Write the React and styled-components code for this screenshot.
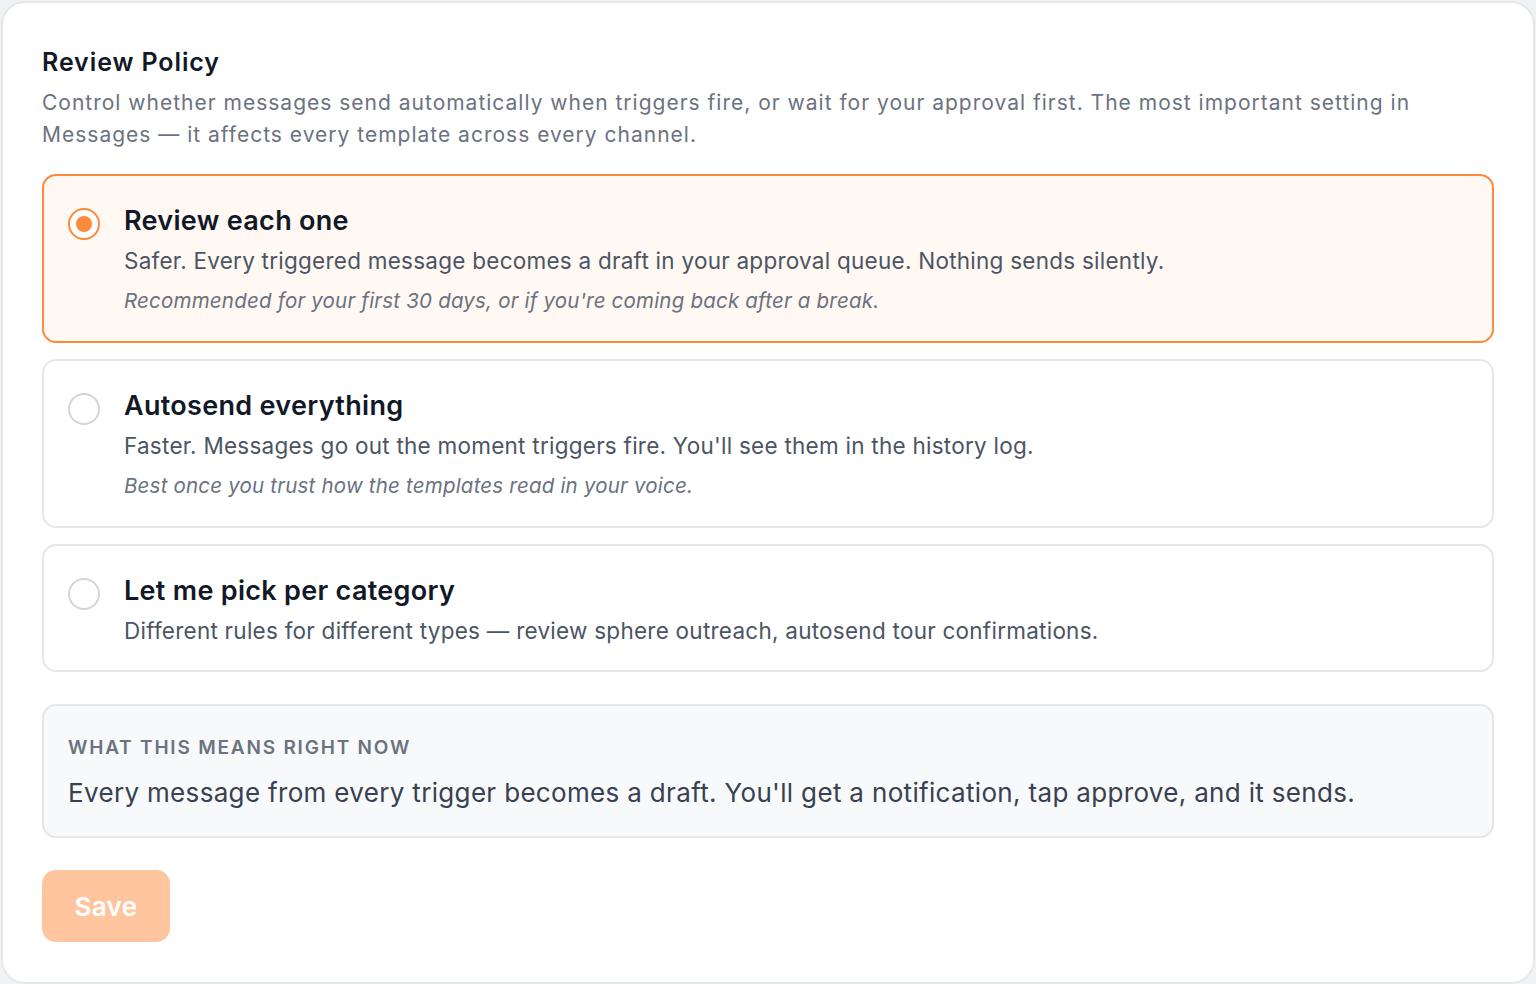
import { useState } from "react";
import styled, { createGlobalStyle } from "styled-components";

const GlobalStyle = createGlobalStyle`
  html, body {
    margin: 0;
    padding: 0;
    background: #f1f2f4;
  }
  * {
    box-sizing: border-box;
  }
  body {
    font-family: Inter, "Noto Sans", sans-serif;
  }
`;

const Card = styled.div`
  margin: 1px;
  min-height: 982px;
  background: #fff;
  border: 2px solid #e7e8ec;
  border-radius: 24px;
  padding: 42px 39px 40px 39px;
`;

const Title = styled.h2`
  margin: 0;
  font-size: 25px;
  font-weight: 600;
  letter-spacing: 0.9px;
  color: #111827;
  line-height: 34px;
`;

const Lead = styled.p`
  margin: 8px 0 0;
  font-size: 21px;
  letter-spacing: 1px;
  line-height: 32px;
  color: #6b7280;
`;

const Options = styled.div`
  display: flex;
  flex-direction: column;
  gap: 16px;
  margin-top: 23px;
`;

const Option = styled.label`
  display: flex;
  gap: 24px;
  padding: 28px 24px ${(p) => (p.$hasNote ? "25px" : "22px")} 24px;
  border: 2px solid ${(p) => (p.$active ? "#fb8a3c" : "#e5e7eb")};
  background: ${(p) => (p.$active ? "#fff8f3" : "#fff")};
  border-radius: 14px;
  cursor: pointer;
`;

const Radio = styled.span`
  flex: none;
  width: 32px;
  height: 32px;
  margin-top: 4px;
  border-radius: 50%;
  border: 2px solid ${(p) => (p.$active ? "#fb8a3c" : "#d1d5db")};
  display: flex;
  align-items: center;
  justify-content: center;
  background: #fff;

  &::after {
    content: "";
    width: 16px;
    height: 16px;
    border-radius: 50%;
    background: #fb8a3c;
    display: ${(p) => (p.$active ? "block" : "none")};
  }
`;

const OptionBody = styled.div`
  display: flex;
  flex-direction: column;
`;

const OptionTitle = styled.div`
  font-size: 27px;
  font-weight: 600;
  letter-spacing: 0.3px;
  color: #111827;
  line-height: 34px;
`;

const OptionDesc = styled.div`
  margin-top: 6px;
  font-size: 22.5px;
  letter-spacing: 0.25px;
  line-height: 34px;
  color: #4b5563;
`;

const OptionNote = styled.div`
  margin-top: 8px;
  font-size: 20.5px;
  letter-spacing: 0.2px;
  font-style: italic;
  line-height: 30px;
  color: #6b7280;
`;

const InfoBox = styled.div`
  margin-top: 32px;
  background: #f8f9fb;
  border: 2px solid #e5e7eb;
  border-radius: 14px;
  padding: 28px 24px 25px;
`;

const InfoLabel = styled.div`
  font-size: 19px;
  font-weight: 600;
  letter-spacing: 1.8px;
  text-transform: uppercase;
  color: #6b7280;
  line-height: 28px;
`;

const InfoText = styled.div`
  margin-top: 13px;
  font-size: 26px;
  letter-spacing: 0.33px;
  line-height: 36px;
  color: #374151;
`;

const SaveButton = styled.button`
  margin-top: 32px;
  width: 128px;
  height: 72px;
  border: none;
  border-radius: 14px;
  background: #fec59f;
  color: #fff;
  font-family: inherit;
  font-size: 26px;
  font-weight: 600;
  letter-spacing: 0.3px;
  cursor: not-allowed;
`;

const options = [
  {
    id: "review",
    title: "Review each one",
    desc: "Safer. Every triggered message becomes a draft in your approval queue. Nothing sends silently.",
    note: "Recommended for your first 30 days, or if you're coming back after a break.",
  },
  {
    id: "auto",
    title: "Autosend everything",
    desc: "Faster. Messages go out the moment triggers fire. You'll see them in the history log.",
    note: "Best once you trust how the templates read in your voice.",
  },
  {
    id: "category",
    title: "Let me pick per category",
    desc: "Different rules for different types — review sphere outreach, autosend tour confirmations.",
  },
];

export default function App() {
  const [selected, setSelected] = useState("review");

  return (
    <>
      <GlobalStyle />
      <Card>
        <Title>Review Policy</Title>
        <Lead>
          Control whether messages send automatically when triggers fire, or wait for your approval
          first. The most important setting in Messages — it affects every template across every
          channel.
        </Lead>
        <Options>
          {options.map((o) => (
            <Option
              key={o.id}
              $active={selected === o.id}
              $hasNote={!!o.note}
              onClick={() => setSelected(o.id)}
            >
              <Radio $active={selected === o.id} />
              <OptionBody>
                <OptionTitle>{o.title}</OptionTitle>
                <OptionDesc>{o.desc}</OptionDesc>
                {o.note && <OptionNote>{o.note}</OptionNote>}
              </OptionBody>
            </Option>
          ))}
        </Options>
        <InfoBox>
          <InfoLabel>What this means right now</InfoLabel>
          <InfoText>
            Every message from every trigger becomes a draft. You'll get a notification, tap
            approve, and it sends.
          </InfoText>
        </InfoBox>
        <SaveButton disabled>Save</SaveButton>
      </Card>
    </>
  );
}
